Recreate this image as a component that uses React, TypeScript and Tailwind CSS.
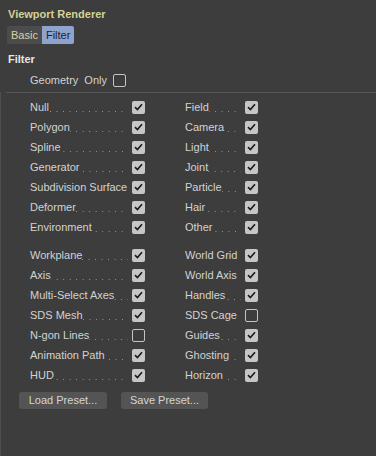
import { Fragment } from "react";

type Item = { label: string; checked: boolean };

const GROUP_A: [Item, Item][] = [
  [{ label: "Null", checked: true }, { label: "Field", checked: true }],
  [{ label: "Polygon", checked: true }, { label: "Camera", checked: true }],
  [{ label: "Spline", checked: true }, { label: "Light", checked: true }],
  [{ label: "Generator", checked: true }, { label: "Joint", checked: true }],
  [{ label: "Subdivision Surface", checked: true }, { label: "Particle", checked: true }],
  [{ label: "Deformer", checked: true }, { label: "Hair", checked: true }],
  [{ label: "Environment", checked: true }, { label: "Other", checked: true }],
];

const GROUP_B: [Item, Item][] = [
  [{ label: "Workplane", checked: true }, { label: "World Grid", checked: true }],
  [{ label: "Axis", checked: true }, { label: "World Axis", checked: true }],
  [{ label: "Multi-Select Axes", checked: true }, { label: "Handles", checked: true }],
  [{ label: "SDS Mesh", checked: true }, { label: "SDS Cage", checked: false }],
  [{ label: "N-gon Lines", checked: false }, { label: "Guides", checked: true }],
  [{ label: "Animation Path", checked: true }, { label: "Ghosting", checked: true }],
  [{ label: "HUD", checked: true }, { label: "Horizon", checked: true }],
];

function Check({ checked }: { checked: boolean }) {
  if (!checked) {
    return (
      <span className="block h-[13px] w-[13px] shrink-0 rounded-[2px] border border-[#c4c4c4]" />
    );
  }
  return (
    <span className="flex h-[13px] w-[13px] shrink-0 items-center justify-center rounded-[2px] bg-[#c6c6c6]">
      <svg width="9" height="8" viewBox="0 0 9 8">
        <path d="M1 4.2 L3.4 6.5 L8 1.2" fill="none" stroke="#1a1a1a" strokeWidth="1.6" />
      </svg>
    </span>
  );
}

// dot leader drawn as a repeating 1px background, aligned to the checkbox side
function Row({ item }: { item: Item }) {
  return (
    <div className="flex h-[20px] items-center">
      <span className="shrink-0 whitespace-nowrap">{item.label}</span>
      <span className="mb-[5px] mr-[4px] h-[1px] min-w-0 flex-1 self-end bg-[linear-gradient(to_right,#9a9a9a_1px,transparent_1px)] bg-[length:6.5px_1px] bg-right bg-repeat-x" />
      <Check checked={item.checked} />
    </div>
  );
}

function Group({ rows }: { rows: [Item, Item][] }) {
  return (
    <div className="grid grid-cols-[115px_73px] gap-x-[40px] pl-[24px]">
      {rows.map(([l, r]) => (
        <Fragment key={l.label}>
          <Row item={l} />
          <Row item={r} />
        </Fragment>
      ))}
    </div>
  );
}

export default function App() {
  return (
    <div
      className="relative h-[456px] w-[376px] overflow-hidden bg-[#3d3d3d] text-[11px] text-[#d2d2d2]"
      style={{ fontFamily: '"Liberation Sans", Arial, sans-serif' }}
    >
      <div className="flex h-[26px] items-center pl-[8px] pt-[2px] font-bold text-[#d4d294]">
        Viewport Renderer
      </div>
      <div className="ml-[7px] flex h-[18px] w-fit overflow-hidden rounded-[2px]">
        <span className="flex items-center bg-[#4c4c4c] px-[4px] text-[#d8d2a4]">Basic</span>
        <span className="flex items-center bg-[#8ea4cc] px-[4px] text-[#1e2233]">Filter</span>
      </div>
      <div className="flex h-[28px] items-center pl-[8px] pt-[3px] font-bold text-[#e6e6e6]">
        Filter
      </div>
      <div className="flex h-[16px] items-center gap-[6px] pl-[30px]">
        <span className="text-[#d2d2d2] [word-spacing:3px]">Geometry Only</span>
        <Check checked={false} />
      </div>
      <div className="flex">
        <div className="mt-[4px] w-[1px] self-stretch bg-[#4e4e4e]" />
        <div className="ml-[5px] flex-1">
          <div className="mt-[4px] h-[1px] bg-[#575757]" />
          <div className="pt-[4px]">
            <Group rows={GROUP_A} />
            <div className="h-[8px]" />
            <Group rows={GROUP_B} />
          </div>
          <div className="flex gap-[14px] pl-[13px] pt-[7px] pb-[60px]">
            <button className="h-[17px] w-[88px] rounded-[3px] bg-[#545454] text-[#d4d4d4]">
              Load Preset...
            </button>
            <button className="h-[17px] w-[87px] rounded-[3px] bg-[#545454] text-[#d4d4d4]">
              Save Preset...
            </button>
          </div>
        </div>
      </div>
    </div>
  );
}
